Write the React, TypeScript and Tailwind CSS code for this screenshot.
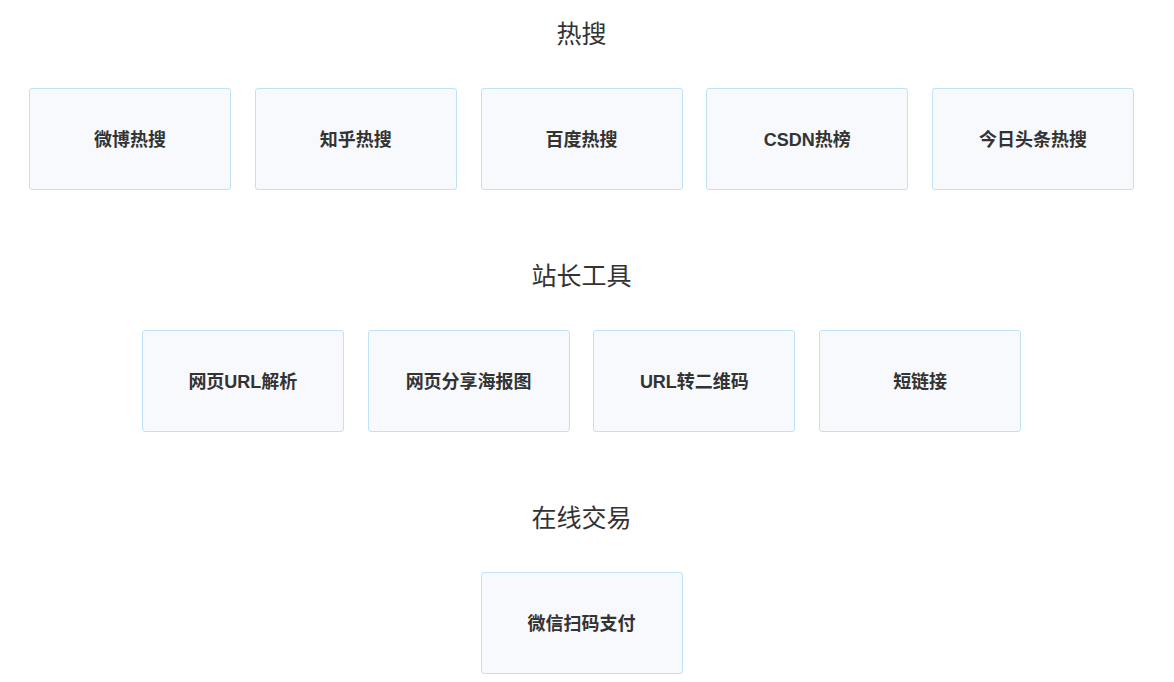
const sections: { title: string; items: string[] }[] = [
  { title: "热搜", items: ["微博热搜", "知乎热搜", "百度热搜", "CSDN热榜", "今日头条热搜"] },
  { title: "站长工具", items: ["网页URL解析", "网页分享海报图", "URL转二维码", "短链接"] },
  { title: "在线交易", items: ["微信扫码支付"] },
];

export default function App() {
  return (
    <div
      className="min-h-screen w-[1163px] bg-white pt-[16px] text-[#333]"
      style={{ fontFamily: '"Liberation Sans", "Noto Sans CJK SC", sans-serif' }}
    >
      {sections.map((s) => (
        <section key={s.title} className="mb-[68px]">
          <h2 className="text-center text-[25px] leading-[36px] font-normal">{s.title}</h2>
          <div className="mt-[36px] flex justify-center gap-[23.75px]">
            {s.items.map((item) => (
              <div
                key={item}
                className="flex h-[102px] w-[202px] items-center justify-center rounded-[3px] border border-[#bfe3f5] bg-[#f7f9fc] pt-[2px] text-[18px] font-bold text-[#333]"
              >
                {item}
              </div>
            ))}
          </div>
        </section>
      ))}
    </div>
  );
}
